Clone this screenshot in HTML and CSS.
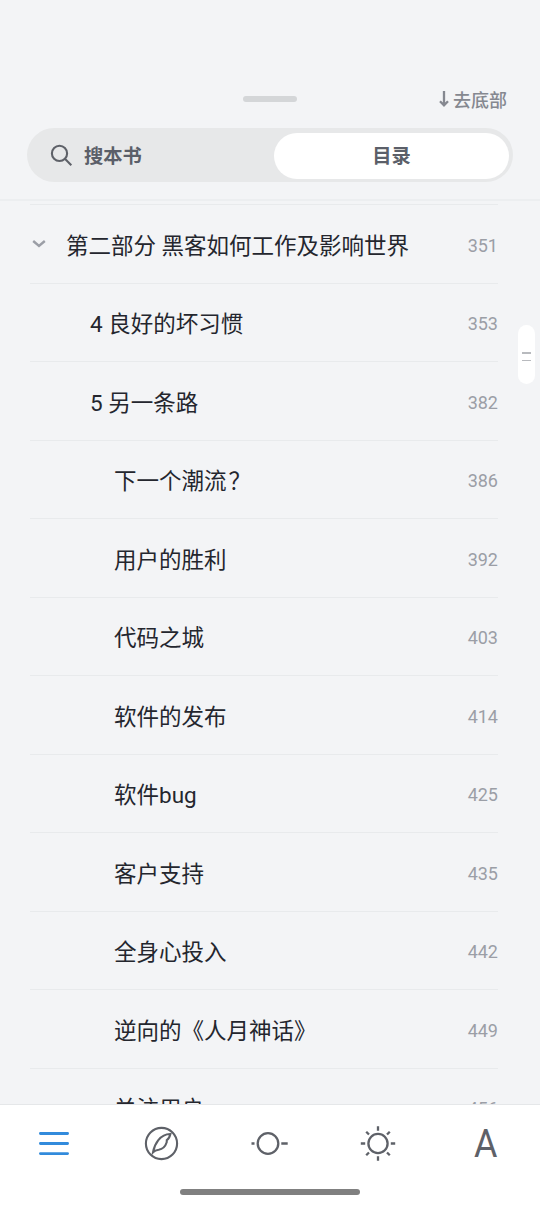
FILE: index.html
```html
<!DOCTYPE html>
<html lang="zh-CN">
<head>
<meta charset="utf-8">
<title>目录</title>
<link rel="stylesheet" href="styles.css">
</head>
<body>
<div class="screen">
  <header class="header">
    <div class="top-row">
      <span class="grabber"></span>
      <button class="to-bottom">
        <svg width="12" height="18" viewBox="0 0 12 18"><path d="M6 1V15.2M2 11.3L6 15.4L10 11.3"/></svg>
        <span>去底部</span>
      </button>
    </div>
    <div class="switcher">
      <div class="search">
        <svg width="24" height="24" viewBox="0 0 24 24"><circle cx="9.5" cy="9.4" r="7.6"/><path d="M14.9 14.8L21.3 21.2"/></svg>
        <span>搜本书</span>
      </div>
      <div class="tab">目录</div>
    </div>
  </header>
  <main class="contents">
    <div class="row part">
      <svg class="chevron" width="16" height="10" viewBox="0 0 16 10"><path d="M2.2 2L8 7L13.8 2"/></svg>
      <span class="title">第二部分 黑客如何工作及影响世界</span><span class="page">351</span>
    </div>
    <div class="row chapter"><span class="title">4 良好的坏习惯</span><span class="page">353</span></div>
    <div class="row chapter"><span class="title">5 另一条路</span><span class="page">382</span></div>
    <div class="row section"><span class="title">下一个潮流<span class="question">？</span></span><span class="page">386</span></div>
    <div class="row section"><span class="title">用户的胜利</span><span class="page">392</span></div>
    <div class="row section"><span class="title">代码之城</span><span class="page">403</span></div>
    <div class="row section"><span class="title">软件的发布</span><span class="page">414</span></div>
    <div class="row section"><span class="title">软件bug</span><span class="page">425</span></div>
    <div class="row section"><span class="title">客户支持</span><span class="page">435</span></div>
    <div class="row section"><span class="title">全身心投入</span><span class="page">442</span></div>
    <div class="row section"><span class="title">逆向的《人月神话》</span><span class="page">449</span></div>
    <div class="row section"><span class="title">关注用户</span><span class="page">456</span></div>
    <div class="scroll-handle"><i></i><i></i></div>
  </main>
  <footer class="footer">
    <nav class="toolbar">
      <svg class="active" width="36" height="36" viewBox="0 0 36 36"><path d="M4.4 7.5H31.6M4.4 17.5H31.6M4.4 27.6H31.6"/></svg>
      <svg width="36" height="36" viewBox="0 0 36 36"><circle cx="17.5" cy="17.5" r="15.6"/><path d="M9 26.4C10.4 18.3 16 7.9 26.4 8C25.7 10.8 24.7 13 22.8 14.2L22.7 16.3C21.5 20.1 18.5 23.2 14.7 23.7C12.4 23.9 10.6 24.6 9 26.4Z"/></svg>
      <svg class="bold" width="40" height="36" viewBox="0 0 40 36"><circle cx="18" cy="17.5" r="10.3"/><path d="M1.5 17.5H4.5M31.3 17.5H37.7"/></svg>
      <svg class="bold" width="36" height="36" viewBox="0 0 36 36"><circle cx="18" cy="17.5" r="9.6"/><path d="M18 .3V4.7M18 30.3V34.7M.8 17.5H5.2M30.8 17.5H35.2M6.2 5.7L9 8.5M27 26.5L29.8 29.3M6.2 29.3L9 26.5M27 8.5L29.8 5.7"/></svg>
      <span class="type">A</span>
    </nav>
    <div class="home"></div>
  </footer>
</div>
</body>
</html>
```
FILE: styles.css
```css
* { box-sizing: border-box; }
body { margin: 0; background: #f3f4f6; font-family: Roboto, "Noto Sans CJK SC", sans-serif; }
svg { display: block; flex: none; fill: none; stroke: #5e6168; stroke-width: 2.1; }
.screen { width: 540px; height: 1206px; display: flex; flex-direction: column; overflow: hidden; }

.header { height: 201px; flex: none; padding: 84px 27px 0; border-bottom: 2px solid #eceef0; }
.top-row { height: 30px; display: grid; grid-template-columns: 1fr 54px 1fr; align-items: center; }
.grabber { grid-column: 2; height: 6px; margin-bottom: 1px; border-radius: 3px; background: #d4d6d8; }
.to-bottom { justify-self: end; display: flex; align-items: center; gap: 3px; padding: 0; margin-right: 6px; border: 0; background: none; color: #858890; font: 500 18px/30px Roboto, "Noto Sans CJK SC", sans-serif; }
.to-bottom span { padding-top: 3px; line-height: 27px; }
.to-bottom svg { stroke: #858890; stroke-width: 2.3; }
.switcher { display: grid; grid-template-columns: 247px 235px; height: 54px; margin-top: 14px; padding: 5px 0 4px; border-radius: 27px; background: #e7e8e9; color: #5b5f69; font-size: 19.3px; font-weight: 700; line-height: 44px; }
.search { display: flex; align-items: center; gap: 10px; padding-left: 23px; }
.search span { padding-top: 2px; }
.tab { padding-top: 2px; border-radius: 23px; background: #fff; text-align: center; }

.contents { flex: 1; min-height: 0; position: relative; padding: 3px 42px 0 30px; overflow: hidden; }
.row { height: 78.5px; display: flex; align-items: center; padding-top: 4px; border-top: 1px solid #e8eaec; color: #24262e; }
.title { flex: 1; font-size: 22.5px; line-height: 34px; white-space: nowrap; }
.question { margin-left: 2px; }
.page { color: #9b9ea6; font-size: 18px; line-height: 30px; }
.chevron { width: 16px; margin: -4px 19px 0 1px; stroke: #9b9ea6; stroke-width: 2.4; }
.chapter { padding-left: 60px; }
.section { padding-left: 84px; }
.scroll-handle { position: absolute; top: 124px; right: 5px; width: 17px; height: 59px; border-radius: 9px; background: #fff; display: flex; flex-direction: column; align-items: center; justify-content: center; gap: 6px; padding-top: 4px; }
.scroll-handle i { width: 9px; height: 1.5px; background: #b8babe; }

.footer { height: 102px; flex: none; background: #fff; border-top: 1px solid #e5e7e9; }
.toolbar { display: grid; grid-template-columns: repeat(5, 108px); justify-items: center; align-items: center; height: 77px; }
.active { stroke: #328bdc; stroke-width: 2.8; stroke-linecap: round; }
.bold { stroke-width: 2.3; }
.type { color: #5e6168; font-size: 39px; line-height: 46px; font-weight: 400; transform: scaleX(.92); }
.home { width: 180px; height: 6px; margin: 7px auto 0; border-radius: 3px; background: #808080; }
```
